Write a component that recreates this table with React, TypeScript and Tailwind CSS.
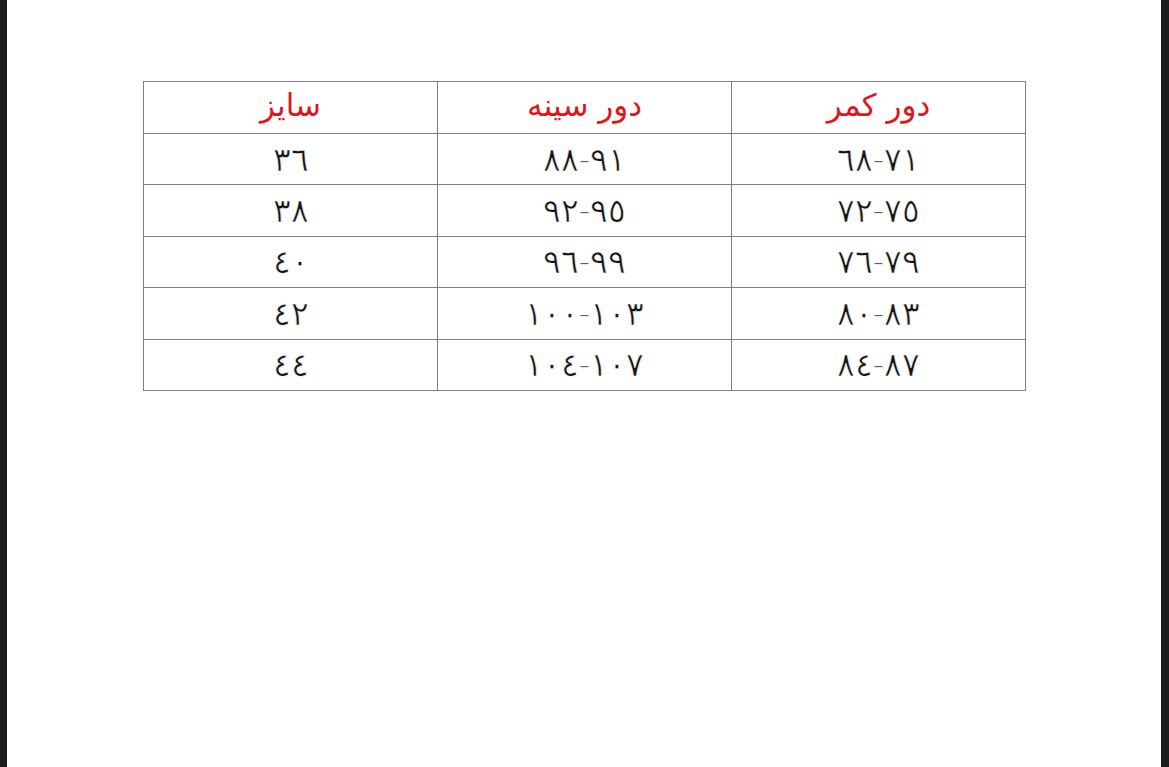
const rows = [
  ["٦٨-٧١", "٨٨-٩١", "٣٦"],
  ["٧٢-٧٥", "٩٢-٩٥", "٣٨"],
  ["٧٦-٧٩", "٩٦-٩٩", "٤٠"],
  ["٨٠-٨٣", "١٠٠-١٠٣", "٤٢"],
  ["٨٤-٨٧", "١٠٤-١٠٧", "٤٤"],
]

const headers = ["دور کمر", "دور سینه", "سایز"]

export default function App() {
  return (
    <div className="flex h-screen w-full bg-white font-['DejaVu_Sans',sans-serif]">
      <div className="w-[7px] shrink-0 bg-[#1b1b1b]" />
      <main className="flex-1 pl-[136px] pt-[81px]">
        <table dir="rtl" className="w-[883px] table-fixed border-collapse">
          <thead>
            <tr className="h-[52px]">
              {headers.map((h) => (
                <th
                  key={h}
                  className="border-[1.5px] border-[#7f7f7f] pb-1 text-center text-[31px] font-normal leading-none text-[#e3141b]"
                >
                  {h}
                </th>
              ))}
            </tr>
          </thead>
          <tbody>
            {rows.map((r, i) => (
              <tr key={i} className="h-[51.4px]">
                {r.map((v, j) => (
                  <td
                    key={j}
                    className="border-[1.5px] border-[#7f7f7f] text-center text-[33px] font-light leading-none text-[#151515]"
                  >
                    <span
                      dir="ltr"
                      className="tracking-[6px] [unicode-bidi:bidi-override] [-webkit-text-stroke:0.6px_white]"
                    >
                      {v}
                    </span>
                  </td>
                ))}
              </tr>
            ))}
          </tbody>
        </table>
      </main>
      <div className="w-[8px] shrink-0 bg-[#1b1b1b]" />
    </div>
  )
}
